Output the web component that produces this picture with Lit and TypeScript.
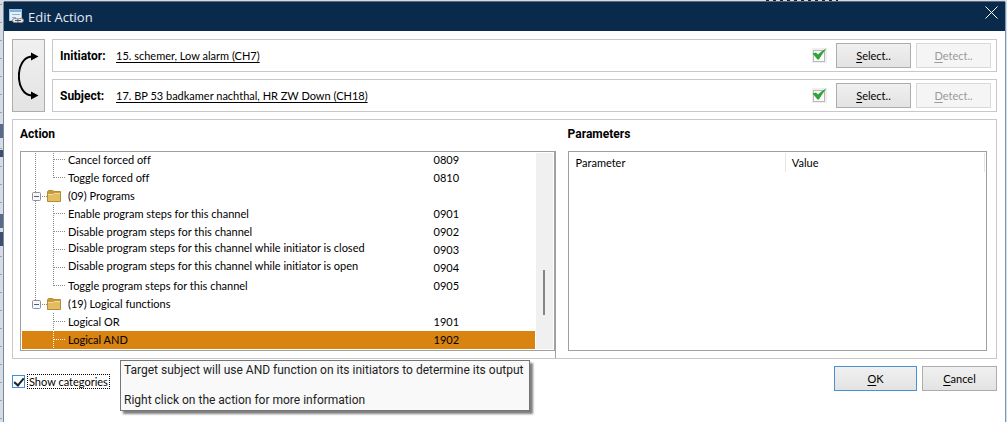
import { LitElement, html, css, svg, nothing } from "lit";
import { customElement, property } from "lit/decorators.js";

const base = css`
  * { box-sizing: border-box; }
  button, a, input, label, table { font: inherit; color: inherit; }
  button {
    height: 25px;
    padding: 0;
    border: 1px solid #adadad;
    border-radius: 0;
    background: linear-gradient(#f0f0f0, #e3e3e3);
  }
  button:disabled { color: #9a9a9a; border-color: #d9d9d9; background: #f5f5f5; }
  u { text-underline-offset: 2px; }
`;

@customElement("channel-row")
class ChannelRow extends LitElement {
  @property() label = "";
  @property() value = "";

  static styles = [base, css`
    :host {
      display: flex;
      align-items: center;
      gap: 5px;
      height: 33px;
      padding: 0 5px 0 7px;
      border: 1px solid #c8c8c8;
    }
    .name { width: 51px; font: 700 12px/14px Roboto, sans-serif; }
    .channel { text-underline-offset: 2px; }
    .tick { margin-left: auto; margin-right: 4px; flex: none; }
    button { width: 75px; }
  `];

  render() {
    return html`
      <span class="name">${this.label}:</span>
      <a class="channel" href="#">${this.value}</a>
      <svg class="tick" width="15" height="15" viewBox="0 0 15 15" aria-hidden="true">
        <rect width="15" height="15" fill="#efefef"/>
        <rect x="1.5" y="2.5" width="11" height="11" fill="#fbfbfb" stroke="#b8b8b8"/>
        <path d="M0.500 5.500 4 4.500 6 6.500 C8.500 4 11 2 14.500 0.500 C11.500 4 9.500 7.500 7 11.500 L5.500 11.500 Z" fill="#2fa33a"/>
      </svg>
      <button><u>S</u>elect..</button>
      <button disabled><u>D</u>etect..</button>
    `;
  }
}

interface Row {
  label: string;
  code?: string;
  folder?: boolean;
  last?: boolean;
  open?: boolean;
  tall?: boolean;
  selected?: boolean;
}

const rows: Row[] = [
  { label: "Cancel forced off", code: "0809", open: true },
  { label: "Toggle forced off", code: "0810", open: true, last: true },
  { label: "(09) Programs", folder: true, open: true },
  { label: "Enable program steps for this channel", code: "0901", open: true },
  { label: "Disable program steps for this channel", code: "0902", open: true },
  { label: "Disable program steps for this channel while initiator is closed", code: "0903", open: true, tall: true },
  { label: "Disable program steps for this channel while initiator is open", code: "0904", open: true, tall: true },
  { label: "Toggle program steps for this channel", code: "0905", open: true, last: true },
  { label: "(19) Logical functions", folder: true },
  { label: "Logical OR", code: "1901" },
  { label: "Logical AND", code: "1902", selected: true },
];

@customElement("action-tree")
class ActionTree extends LitElement {
  static styles = [base, css`
    :host {
      display: flex;
      height: 200px;
      padding: 1px;
      border: 1px solid #a0a0a0;
      overflow: hidden;
    }
    .view { flex: 1; min-width: 0; height: 196px; display: flex; flex-direction: column; justify-content: flex-end; overflow: hidden; }
    table { width: 100%; border-collapse: collapse; table-layout: fixed; }
    tr { height: 18px; }
    td { height: 18px; padding: 0; line-height: 18px; white-space: nowrap; }
    .code { width: 101px; }
    .item { display: flex; height: 18px; }
    .guide { width: 46px; flex: none; }
    .tall { line-height: 14px; }
    .selected { background: #d98310; }
    .track { width: 17px; margin-left: 1px; background: #f0f0f0; display: flex; justify-content: center; align-items: flex-start; padding-top: 117px; }
    .thumb { width: 2px; height: 45px; background: #858585; }
  `];

  guide(r: Row) {
    const line = r.selected ? "#ffffff" : "#8a8a8a";
    return html`<svg class="guide" width="46" height="18" viewBox="0 0 46 18" aria-hidden="true">
      <g stroke=${line} stroke-dasharray="1 1" fill="none">
        ${r.open ? svg`<path d="M13.500 0V18"/>` : nothing}
        ${r.folder
          ? svg`${r.open ? nothing : svg`<path d="M13.500 0V5"/>`}<path d="M20 9.500H25"/>`
          : svg`<path d=${r.last ? "M31.500 0V9" : "M31.500 0V18"}/><path d="M32 8.500H43"/>`}
      </g>
      ${r.folder
        ? svg`<rect x="10.500" y="5.500" width="8" height="8" rx="1" fill="#f8f8f8" stroke="#919191"/>
          <path d="M12 9.500H17" stroke="#3f5fa8"/>
          <path d="M25.500 4.500 26.500 3.500H30.500L32 4.500H38.500V14.500H25.500Z" fill="#c99a3a" stroke="#b98a30"/>
          <path d="M26 8H31L32.500 7H38V14H26Z" fill="#e2bd62"/>
          <path d="M26 7.500H31L32.500 6.500H38" stroke="#f3dc98" fill="none"/>`
        : nothing}
    </svg>`;
  }

  render() {
    return html`
      <div class="view">
        <table>
          <colgroup><col><col class="code"></colgroup>
          <tbody>
            ${rows.map((r) => html`<tr class=${r.selected ? "selected" : ""}>
              <td><div class="item">${this.guide(r)}<span class=${r.tall ? "tall" : ""}>${r.label}</span></div></td>
              <td>${r.code ?? ""}</td>
            </tr>`)}
          </tbody>
        </table>
      </div>
      <div class="track"><div class="thumb"></div></div>
    `;
  }
}

@customElement("app-root")
class AppRoot extends LitElement {
  static styles = [base, css`
    :host {
      display: block;
      font: 11px/14px Lato, sans-serif;
      font-variant-ligatures: none;
      color: #000;
      background:
        repeating-linear-gradient(90deg, #222 0 3px, transparent 3px 7px) 766px 0 / 72px 1px no-repeat,
        linear-gradient(#3d4f70, #3d4f70) 0 150px / 3px 7px no-repeat,
        linear-gradient(#5a6b8a, #5a6b8a) 0 124px / 3px 14px no-repeat,
        linear-gradient(#5a6b8a, #5a6b8a) 0 214px / 3px 14px no-repeat,
        linear-gradient(#3d4f70, #3d4f70) 0 232px / 3px 14px no-repeat,
        repeating-linear-gradient(transparent 0 4px, #9aa3b0 4px 5px, transparent 5px 18px) 0 0 / 2px 100% no-repeat,
        #d5dce5;
      padding: 2px 2px 0 4px;
    }
    .window { min-height: calc(100vh - 2px); background: #fff; position: relative; box-shadow: -1px 0 #7c8798, 1px 0 #7f96b4, 0 -1px #5e6b7c; }
    header {
      display: flex;
      align-items: center;
      height: 29px;
      padding: 0 4px 0 5px;
      background: #0a2a4c;
      color: #e4ebf3;
    }
    h1 { margin: 0 auto 0 4px; font: 400 13px/18px "Open Sans", sans-serif; }
    header button { width: 20px; height: 20px; margin-bottom: 8px; border: 0; background: none; display: flex; align-items: center; justify-content: center; }
    main { display: flex; flex-direction: column; gap: 7px; padding: 8px 8px 0; }
    .channels { display: flex; gap: 7px; }
    .swap { width: 33px; height: auto; display: flex; align-items: center; justify-content: center; }
    .stack { flex: 1; display: flex; flex-direction: column; gap: 7px; }
    .panels { display: flex; border: 1px solid #c8c8c8; }
    .actions { flex: 0 0 55.2%; padding: 7px 0 0 7px; }
    .split { padding-bottom: 7px; border-right: 1px solid #a0a0a0; }
    .params { flex: 1; padding: 7px 9px 7px 12px; }
    h2 { margin: 0 0 10px; font: 700 12px/14px Roboto, sans-serif; }
    .list { height: 200px; padding: 1px; border: 1px solid #a0a0a0; }
    table { width: 100%; border-collapse: collapse; table-layout: fixed; }
    th { height: 19px; padding: 0 6px; text-align: left; font-weight: 400; border-right: 1px solid #e5e5e5; }
    th:first-child { width: 52%; }
    footer { display: flex; gap: 5px; align-items: flex-start; }
    .option { display: flex; align-items: center; gap: 2px; margin: 8px auto 0 0; }
    .option input {
      appearance: none; width: 13px; height: 13px; margin: 0; border: 1px solid #3c8fdc;
      background: #fff; display: grid; place-items: center;
    }
    .option input:checked::before { content: ""; width: 4px; height: 8px; margin-bottom: 2px; border: solid #222; border-width: 0 2px 2px 0; transform: rotate(40deg); }
    .option label { border: 1px dotted #000; padding: 0 1px; line-height: 13px; }
    .ok { width: 83px; border-color: #4a90d9; }
    .cancel { width: 75px; }
    .tip {
      position: absolute; left: 116px; top: 358px;
      padding: 2px 6px 2px 3px;
      border: 1px solid #767676; background: #f9f9f9; color: #222;
      box-shadow: 3px 3px 2px rgba(0, 0, 0, 0.5);
      font: 12px/15px Roboto, sans-serif;
      white-space: pre-line;
    }
  `];

  render() {
    return html`
      <div class="window">
        <header>
          <svg width="15" height="15" viewBox="0 0 15 15" aria-hidden="true">
            <rect x="0.500" y="0.500" width="12" height="11" fill="#e6f0f9" stroke="#9cc3e4"/>
            <path d="M1 2H12" stroke="#7fb2dd" stroke-width="2"/>
            <path d="M3 5.500H11M3 8.500H7" stroke="#8db4d6"/>
            <g fill="#e8e8e8" stroke="#8a8a8a"><rect x="3.500" y="9.500" width="6" height="4" rx="2"/><rect x="8.500" y="9.500" width="6" height="4" rx="2"/></g>
            <path d="M6 11.500H12" stroke="#555"/>
          </svg>
          <h1>Edit Action</h1>
          <button aria-label="Close">
            <svg width="13" height="13" viewBox="0 0 13 13"><path d="M0.500 0.500 12.500 12.500M12.500 0.500 0.500 12.500" stroke="#fff"/></svg>
          </button>
        </header>
        <main>
          <div class="channels">
            <button class="swap" aria-label="Swap initiator and subject">
              <svg width="21" height="48" viewBox="0 0 21 48">
                <path d="M14 4.500C-3.500 5 -3.500 43 14 43.500" fill="none" stroke="#000" stroke-width="2"/>
                <path d="M13 0.500 20.500 4.500 13 8.500ZM13 39.500 20.500 43.500 13 47.500Z"/>
              </svg>
            </button>
            <div class="stack">
              <channel-row label="Initiator" value="15. schemer, Low alarm (CH7)"></channel-row>
              <channel-row label="Subject" value="17. BP 53 badkamer nachthal, HR ZW Down (CH18)"></channel-row>
            </div>
          </div>
          <div class="panels">
            <section class="actions">
              <h2>Action</h2>
              <div class="split"><action-tree></action-tree></div>
            </section>
            <section class="params">
              <h2>Parameters</h2>
              <div class="list">
                <table><thead><tr><th>Parameter</th><th>Value</th></tr></thead></table>
              </div>
            </section>
          </div>
          <footer>
            <div class="option"><input type="checkbox" id="cats" checked><label for="cats">Show categories</label></div>
            <button class="ok"><u>O</u>K</button>
            <button class="cancel"><u>C</u>ancel</button>
          </footer>
        </main>
        <div class="tip" role="tooltip">Target subject will use AND function on its initiators to determine its output

Right click on the action for more information</div>
      </div>
    `;
  }
}
